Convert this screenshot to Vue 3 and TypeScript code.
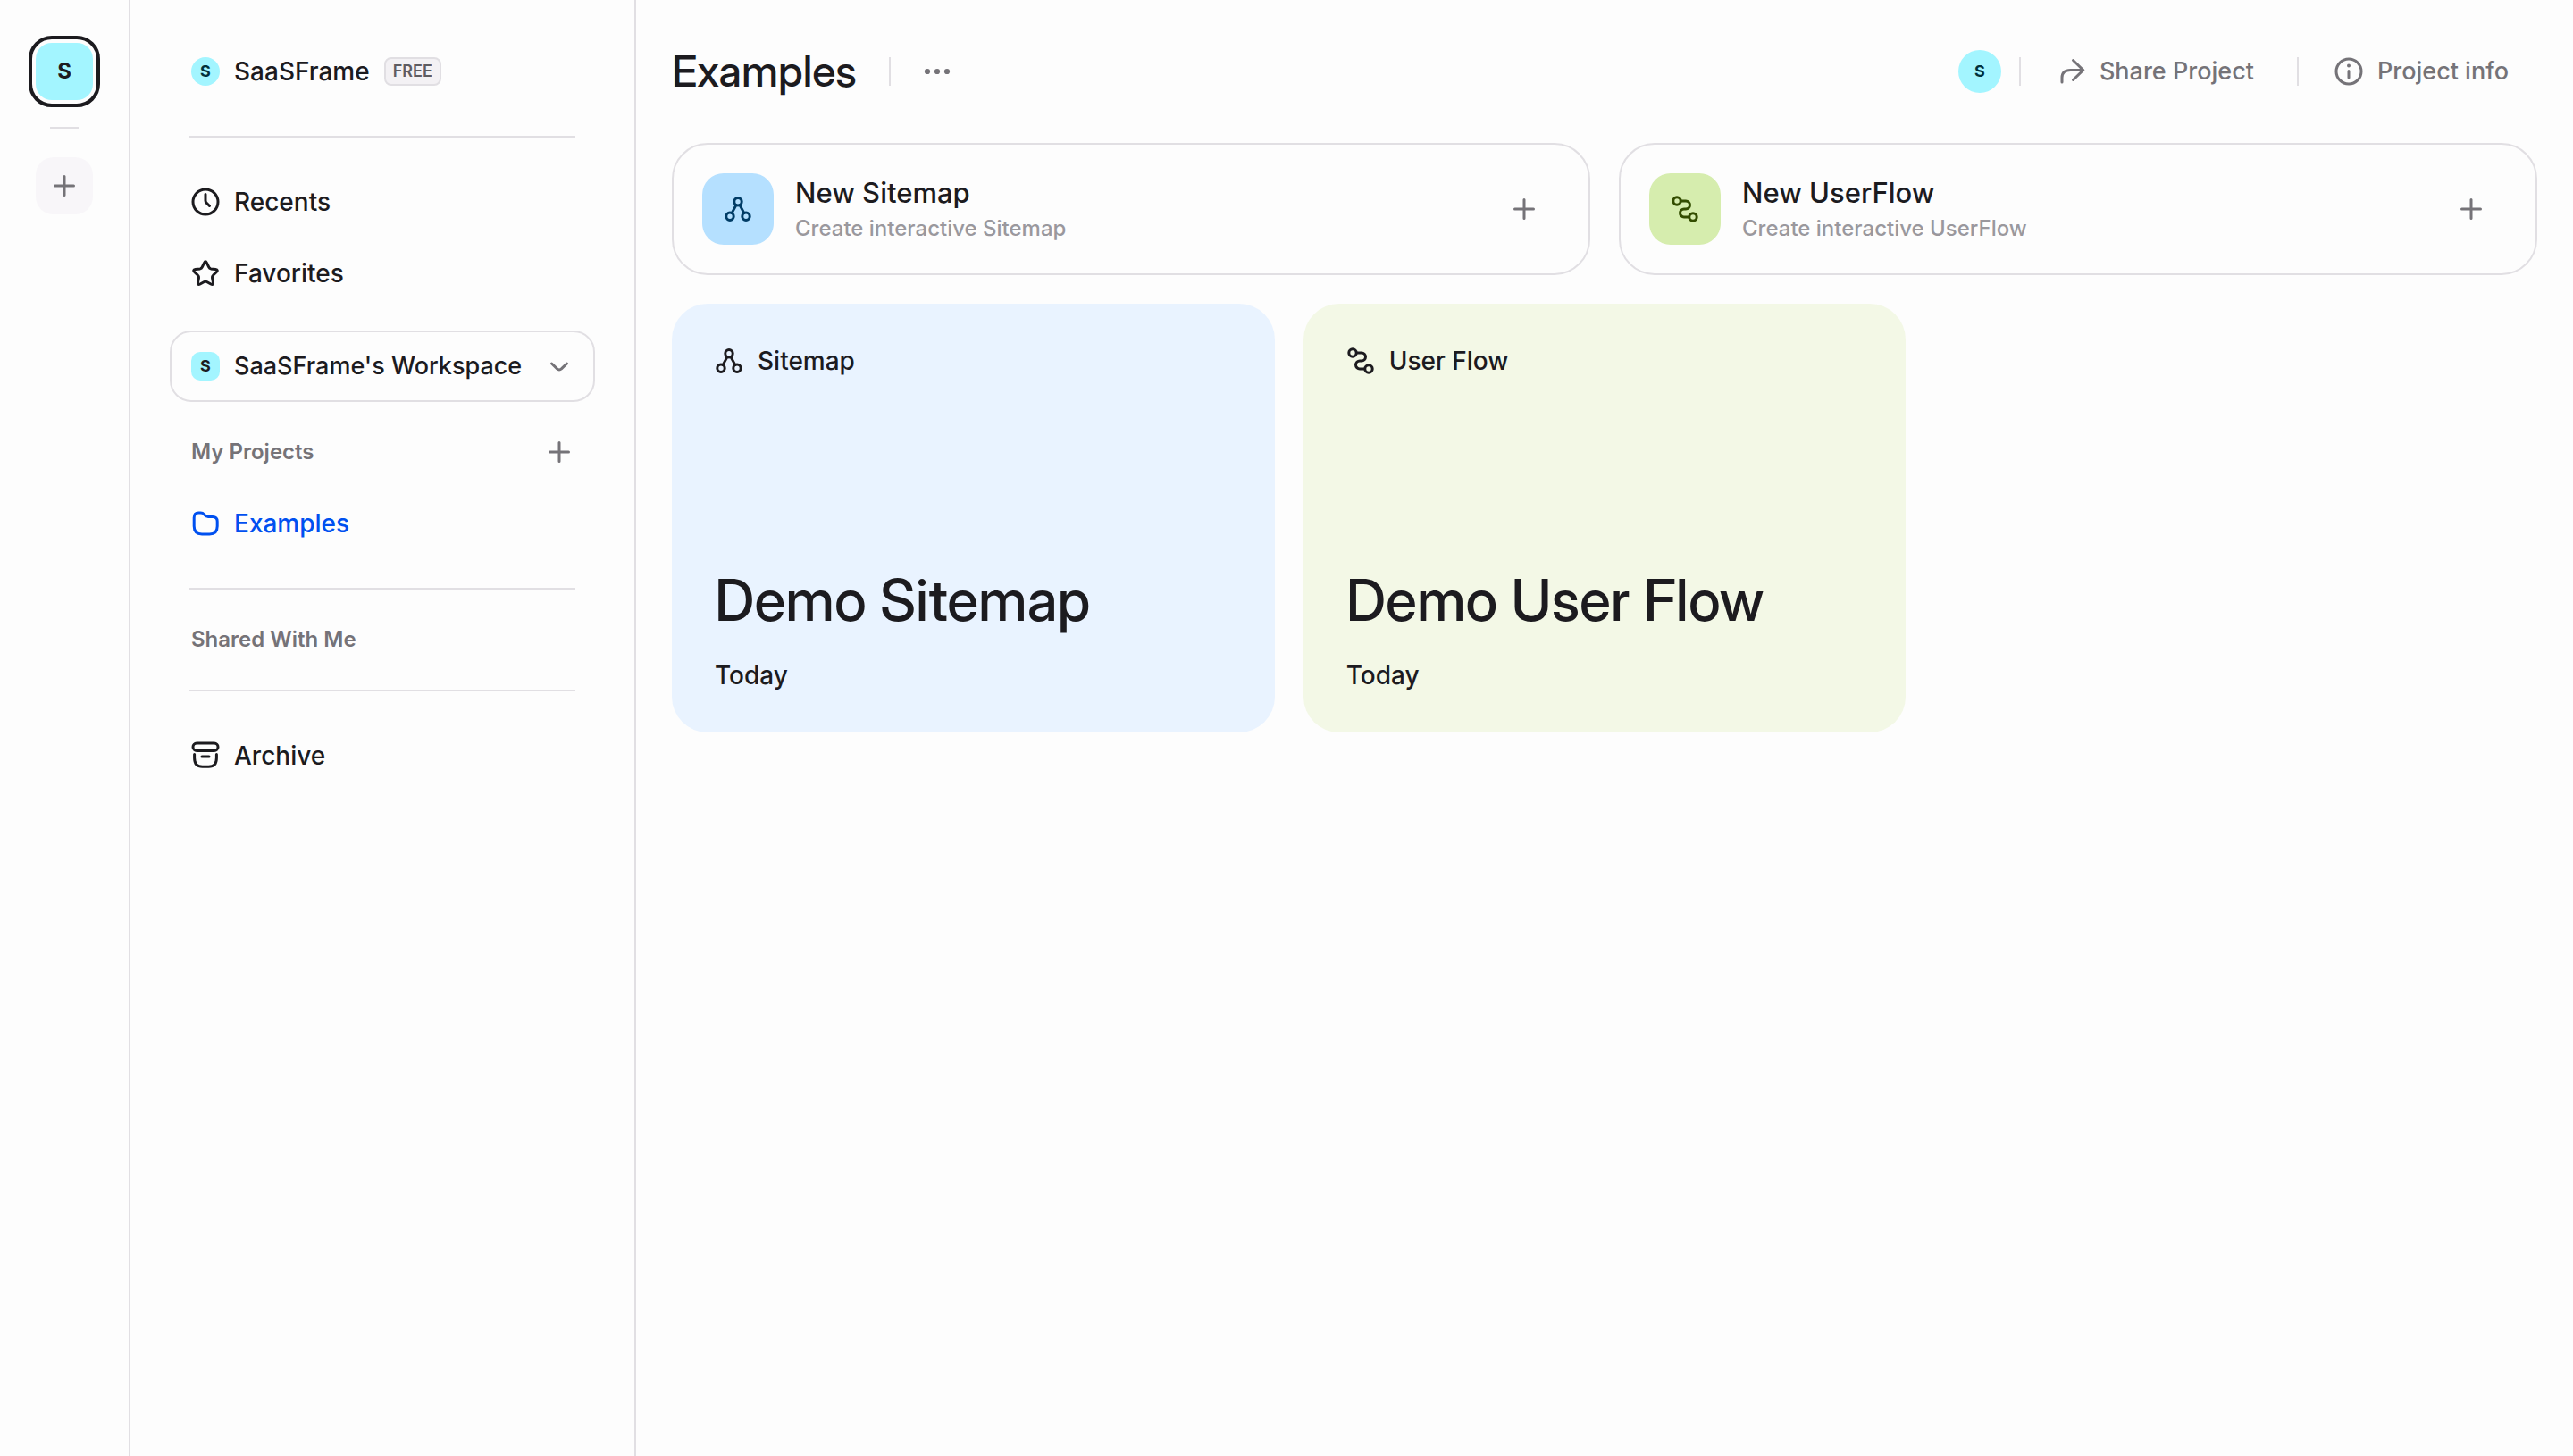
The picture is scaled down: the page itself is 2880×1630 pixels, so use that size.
<script setup lang="ts">
import { h } from 'vue'

const glyphs: Record<string, string> = {
  clock: '<circle cx="16" cy="16" r="14"/><path d="M16 7.5V14.5Q16 16 17 17L20.5 20.5"/>',
  star: '<path d="M14.5 4.4Q16 1.2 17.5 4.4L19.8 9.2Q20.5 10.6 22 10.9L27.3 11.6Q30.8 12.1 28.2 14.6L24.4 18.3Q23.3 19.3 23.5 20.9L24.5 26.1Q25 29.7 22 28L17.4 25.5Q16 24.8 14.6 25.5L10 28Q7 29.7 7.5 26.1L8.5 20.9Q8.7 19.3 7.6 18.3L3.8 14.6Q1.2 12.1 4.7 11.6L10 10.9Q11.5 10.6 12.2 9.2Z"/>',
  folder: '<path d="M3.2 9.5C3.2 6 5 4 8.2 4H10.5C12.6 4 13.5 4.6 14.6 5.9C15.9 7.5 16.6 8.6 19 8.6H24C27.5 8.6 29.2 10.4 29.2 13.8V19C29.2 25 26.5 28 20.5 28H12C6 28 3.2 25 3.2 19Z"/>',
  archive: '<rect x="2" y="2" width="28" height="8.5" rx="4.2"/><path d="M3.6 14.5V18.5C3.6 25 6.5 28.3 12.5 28.3H19.5C25.5 28.3 28.4 25 28.4 18.5V14.5M12 17H20"/>',
  plus: '<path d="M16 5.5V26.5M5.5 16H26.5"/>',
  chevron: '<path d="M7.5 13L13.6 18.9Q16 21 18.4 18.9L24.5 13"/>',
  sitemap: '<circle cx="16" cy="7.7" r="4.2"/><circle cx="7" cy="24.3" r="4.2"/><circle cx="25" cy="24.3" r="4.2"/><path d="M14 11.6L9.2 20.4M18 11.6L22.8 20.4"/>',
  flow: '<circle cx="7" cy="7" r="4.2"/><circle cx="25" cy="25" r="4.2"/><path d="M11.5 7H17A4.5 4.5 0 0 1 17 16H15A4.5 4.5 0 0 0 15 25H20.5"/>',
  share: '<path d="M18.5 3.5L29.8 14.5L18.5 25.5M29.5 14.5H15.5C9 14.5 6 17.5 6 23V28"/>',
  info: '<circle cx="16" cy="16" r="14"/><path d="M16 15.5V23"/><circle cx="16" cy="9.6" r="2" fill="currentColor" stroke="none"/>',
  more: '<g fill="currentColor" stroke="none"><circle cx="5" cy="16" r="3.1"/><circle cx="16" cy="16" r="3.1"/><circle cx="27" cy="16" r="3.1"/></g>',
}

const Icon = (props: { name: string }) =>
  h('svg', { class: 'icon', viewBox: '0 0 32 32', 'aria-hidden': 'true', innerHTML: glyphs[props.name] })
Icon.props = ['name']

const creators = [
  { title: 'New Sitemap', text: 'Create interactive Sitemap', icon: 'sitemap', tone: 'blue' },
  { title: 'New UserFlow', text: 'Create interactive UserFlow', icon: 'flow', tone: 'green' },
]

const documents = [
  { kind: 'Sitemap', title: 'Demo Sitemap', date: 'Today', icon: 'sitemap', tone: 'blue' },
  { kind: 'User Flow', title: 'Demo User Flow', date: 'Today', icon: 'flow', tone: 'green' },
]
</script>

<template>
  <div class="app">
    <aside class="rail">
      <button class="team" aria-label="SaaSFrame"><span class="team-face">S</span></button>
      <hr class="rail-rule">
      <button class="team-add" aria-label="Add workspace"><Icon name="plus" /></button>
    </aside>

    <nav class="sidebar">
      <div class="row">
        <span class="avatar">S</span>
        <span>SaaSFrame</span>
        <span class="badge">FREE</span>
      </div>
      <hr class="rule">
      <a class="row" href="#recents"><Icon name="clock" />Recents</a>
      <a class="row" href="#favorites"><Icon name="star" />Favorites</a>
      <button class="workspace">
        <span class="avatar square">S</span>
        <span class="grow">SaaSFrame's Workspace</span>
        <Icon name="chevron" class="muted" />
      </button>
      <div class="row heading">
        <h2 class="grow">My Projects</h2>
        <button aria-label="New project"><Icon name="plus" /></button>
      </div>
      <a class="row current" href="#examples"><Icon name="folder" />Examples</a>
      <hr class="rule before-shared">
      <div class="row heading"><h2>Shared With Me</h2></div>
      <hr class="rule after-shared">
      <a class="row" href="#archive"><Icon name="archive" />Archive</a>
    </nav>

    <main class="main">
      <header class="header">
        <h1>Examples</h1>
        <span class="divider" />
        <button class="more" aria-label="More"><Icon name="more" /></button>
        <div class="actions">
          <span class="avatar large">S</span>
          <span class="divider" />
          <button class="action share"><Icon name="share" />Share Project</button>
          <span class="divider" />
          <button class="action info"><Icon name="info" />Project info</button>
        </div>
      </header>

      <section class="creators">
        <button v-for="c in creators" :key="c.title" class="creator">
          <span class="tile" :class="c.tone"><Icon :name="c.icon" /></span>
          <span class="grow">
            <span class="creator-title">{{ c.title }}</span>
            <span class="creator-text">{{ c.text }}</span>
          </span>
          <span class="creator-add"><Icon name="plus" /></span>
        </button>
      </section>

      <section class="documents">
        <a v-for="d in documents" :key="d.title" href="#document" class="document" :class="d.tone">
          <span class="kind"><Icon :name="d.icon" />{{ d.kind }}</span>
          <h3>{{ d.title }}</h3>
          <span>{{ d.date }}</span>
        </a>
      </section>
    </main>
  </div>
</template>

<style>
body {
  margin: 0;
  background: #fdfdfd;
}
</style>

<style scoped>
.app {
  display: flex;
  min-height: 100vh;
  color: #1c1b1f;
  font: 500 28px/32px Inter, "Liberation Sans", sans-serif;
}

.app * {
  box-sizing: border-box;
}

button {
  margin: 0;
  padding: 0;
  border: 0;
  background: none;
  color: inherit;
  font: inherit;
  text-align: left;
  cursor: pointer;
}

a {
  color: inherit;
  text-decoration: none;
}

h1,
h2,
h3,
hr {
  margin: 0;
  border: 0;
}

.icon {
  display: block;
  flex: none;
  width: 32px;
  height: 32px;
  fill: none;
  stroke: currentColor;
  stroke-width: 3;
  stroke-linecap: round;
  stroke-linejoin: round;
}

.grow {
  flex: 1;
}

.muted {
  color: #757378;
}

.rail {
  display: flex;
  flex: none;
  flex-direction: column;
  align-items: center;
  width: 146px;
  padding-top: 40px;
  border-right: 2px solid #e1dfe3;
}

.team {
  width: 80px;
  height: 80px;
  padding: 4px;
  border: 4px solid #1c1b1f;
  border-radius: 26px;
}

.team-face {
  display: flex;
  align-items: center;
  justify-content: center;
  height: 64px;
  border-radius: 18px;
  background: #a3f5ff;
  font-size: 24px;
  font-weight: 700;
}

.rail-rule {
  width: 32px;
  height: 2px;
  margin: 22px 0 32px;
  background: #e1dfe3;
}

.team-add {
  display: flex;
  align-items: center;
  justify-content: center;
  width: 64px;
  height: 64px;
  border-radius: 20px;
  background: #f8f6f9;
  color: #757378;
}

.sidebar {
  flex: none;
  width: 566px;
  padding-top: 40px;
  border-right: 2px solid #e1dfe3;
}

.row {
  display: flex;
  align-items: center;
  gap: 16px;
  height: 80px;
  padding: 0 68px;
}

.current {
  color: #0050f0;
}

.avatar {
  display: flex;
  flex: none;
  align-items: center;
  justify-content: center;
  width: 32px;
  height: 32px;
  border-radius: 50%;
  background: #a3f5ff;
  color: #00303b;
  font-size: 18px;
  font-weight: 700;
}

.avatar.square {
  border-radius: 10px;
  color: #1c1b1f;
}

.avatar.large {
  width: 48px;
  height: 48px;
}

.badge {
  padding: 0 8px;
  border: 2px solid #e1dfe3;
  border-radius: 8px;
  background: #f3f1f4;
  color: #5e5c61;
  font-size: 18px;
  font-weight: 600;
  line-height: 28px;
}

.rule {
  height: 2px;
  margin: 32px 66px;
  background: #e1dfe3;
}

.rule.before-shared {
  margin-bottom: 16px;
}

.rule.after-shared {
  margin-top: 16px;
}

.workspace {
  display: flex;
  align-items: center;
  gap: 16px;
  width: 476px;
  height: 80px;
  margin: 24px 44px 16px;
  padding: 0 22px;
  border: 2px solid #e1dfe3;
  border-radius: 24px;
  font-size: 27px;
  white-space: nowrap;
}

.heading {
  color: #757378;
}

.heading h2 {
  font-size: 24px;
  font-weight: 600;
}

.main {
  flex: 1;
  min-width: 0;
  padding: 40px;
}

.header {
  display: flex;
  align-items: center;
  height: 80px;
  margin-bottom: 40px;
}

h1,
h3 {
  font-family: "Inter Display", Inter, "Liberation Sans", sans-serif;
  font-weight: 500;
}

h1 {
  margin-right: 36px;
  font-size: 48px;
  line-height: 64px;
}

.divider {
  width: 2px;
  height: 32px;
  background: #e1dfe3;
}

.more {
  margin-left: 36px;
  color: #757378;
}

.actions {
  display: flex;
  align-items: center;
  margin-left: auto;
  padding-right: 32px;
  color: #757378;
}

.actions .avatar {
  margin-right: 20px;
}

.action {
  display: flex;
  align-items: center;
  gap: 16px;
  font-size: 27px;
}

.share {
  margin: 0 48px 0 40px;
}

.info {
  margin-left: 40px;
}

.creators {
  display: grid;
  grid-template-columns: 1fr 1fr;
  gap: 32px;
}

.creator {
  display: flex;
  align-items: center;
  gap: 24px;
  padding: 32px;
  border: 2px solid #e1dfe3;
  border-radius: 40px;
}

.tile {
  display: flex;
  align-items: center;
  justify-content: center;
  width: 80px;
  height: 80px;
  border-radius: 24px;
}

.tile.blue {
  background: #b5e0ff;
  color: #003c66;
}

.tile.green {
  background: #d6edae;
  color: #334d00;
}

.creator-title,
.creator-text {
  display: block;
}

.creator-title {
  font-size: 31px;
  line-height: 44px;
}

.creator-text {
  color: #9a989d;
  font-size: 24px;
  line-height: 36px;
}

.creator-add {
  display: flex;
  justify-content: center;
  width: 80px;
  color: #757378;
}

.documents {
  display: grid;
  grid-template-columns: repeat(3, 1fr);
  gap: 32px;
  margin-top: 32px;
}

.document {
  display: flex;
  flex-direction: column;
  height: 480px;
  padding: 48px;
  border-radius: 40px;
}

.document.blue {
  background: #e9f3ff;
}

.document.green {
  background: #f3f8e6;
}

.kind {
  display: flex;
  align-items: center;
  gap: 16px;
}

h3 {
  margin: auto 0 28px;
  font-size: 64px;
  line-height: 80px;
}
</style>
